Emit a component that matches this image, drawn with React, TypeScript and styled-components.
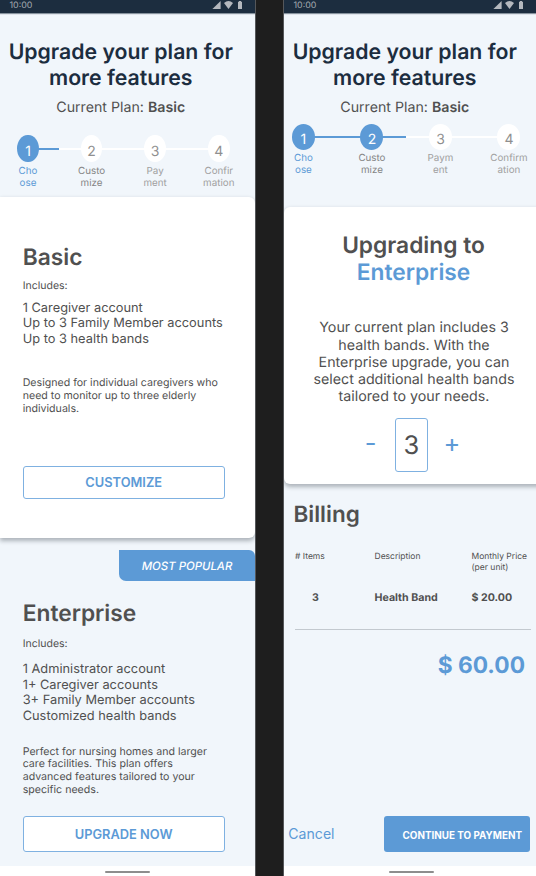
import React from "react";
import styled, { createGlobalStyle, css } from "styled-components";

const blue = "#5c9ad6";
const ink = "#505050";
const navy = "#1c2d3f";

const GlobalStyle = createGlobalStyle`
  * { box-sizing: border-box; }
  body {
    margin: 0;
    background: #1e1e1e;
    font-family: Inter, sans-serif;
    text-rendering: geometricPrecision;
    color: ${ink};
  }
`;

const Board = styled.main`
  display: grid;
  grid-template-columns: 255px 252px;
  column-gap: 29px;
  width: 536px;
  height: 876px;
  overflow: hidden;
`;

const Screen = styled.section`
  display: flex;
  flex-direction: column;
  height: 876px;
  min-width: 0;
  background: #f1f6fb;
  box-shadow: 0 0 0 1px #55575a;
  overflow: hidden;
`;

const StatusBar = styled.header`
  display: flex;
  justify-content: space-between;
  flex: none;
  height: 13px;
  padding: 0 12px 0 9.5px;
  background: ${navy};
  box-shadow: 0 1px 1px rgba(28, 45, 63, 0.5);
  color: #a3a9b0;
  font-size: 8.9px;
  line-height: 12px;
`;

const StatusIcons = styled.svg`
  display: block;
  width: 31px;
  height: 10px;
  fill: #b4b8be;
`;

const Heading = styled.div`
  flex: none;
  width: 241.5px;
  height: 76px;
  margin-top: 27px;
  text-align: center;
`;

const Title = styled.h1`
  margin: 0 0 7.4px;
  color: ${navy};
  font-size: 21.25px;
  font-weight: 600;
  line-height: 25.8px;
`;

const CurrentPlan = styled.p`
  margin: 0;
  font-size: 14.2px;
  line-height: 17px;
  b { font-weight: 600; }
`;

const Steps = styled.ol<{ $left: number; $top: number; $pitch: number }>`
  display: grid;
  grid-template-columns: repeat(4, ${(p) => p.$pitch}px);
  flex: none;
  margin: 0 0 0 ${(p) => p.$left}px;
  padding: ${(p) => p.$top}px 0 0;
  list-style: none;
`;

const Step = styled.li`
  display: grid;
  justify-items: center;
`;

const Track = styled.div<{ $from: string; $to: string; $height: number }>`
  display: grid;
  grid-template-rows: 100%;
  justify-items: center;
  width: calc(100% + 1px);
  height: ${(p) => p.$height}px;
  background:
    linear-gradient(${(p) => p.$from}, ${(p) => p.$from}) left center / 50% 2px no-repeat,
    linear-gradient(${(p) => p.$to}, ${(p) => p.$to}) right center / 50% 2px no-repeat;
`;

const Dot = styled.span<{ $on: boolean; $width: number; $height: number }>`
  width: ${(p) => p.$width}px;
  height: ${(p) => p.$height}px;
  border-radius: 50%;
  background: ${(p) => (p.$on ? blue : "#fff")};
  color: ${(p) => (p.$on ? "#fff" : "#8f8f8f")};
  font-size: 14px;
  line-height: ${(p) => p.$height + 6.6}px;
  text-align: center;
`;

const StepLabel = styled.span<{ $color: string }>`
  margin-top: 3.6px;
  color: ${(p) => p.$color};
  font-size: 9.8px;
  line-height: 12.1px;
  text-align: center;
  white-space: pre-line;
`;

const cardShadow = css`
  background: #fff;
  box-shadow: 0 2.5px 4px rgba(30, 40, 50, 0.32);
`;

const PlanCard = styled.article`
  ${cardShadow}
  display: flex;
  flex-direction: column;
  flex: none;
  height: 341px;
  padding: 46.3px 22.7px 39.5px;
  border-radius: 0 6px 6px 0;
`;

const PlanPanel = styled.article`
  display: flex;
  flex-direction: column;
  flex: 1;
  padding: 19.2px 22.7px 14px;
`;

const PlanName = styled.h2`
  margin: 0;
  font-size: 22.75px;
  font-weight: 600;
  line-height: 27px;
`;

const Includes = styled.p<{ $gap: number }>`
  margin: ${(p) => p.$gap}px 0 0;
  font-size: 10.5px;
  line-height: 13px;
`;

const Features = styled.ul<{ $gap: number }>`
  margin: ${(p) => p.$gap}px 0 0;
  padding: 0;
  list-style: none;
  font-size: 12.82px;
  line-height: 15.7px;
  white-space: nowrap;
`;

const Blurb = styled.p<{ $gap: number }>`
  margin: ${(p) => p.$gap}px 0 0;
  font-size: 10.62px;
  line-height: 12.8px;
  white-space: pre-line;
`;

const OutlineButton = styled.button<{ $height: number }>`
  width: 202px;
  height: ${(p) => p.$height}px;
  margin-top: auto;
  padding: 1px 0 0;
  border: 1px solid #7fb1e1;
  border-radius: 3px;
  background: #fff;
  color: ${blue};
  font: 600 12.85px Inter, sans-serif;
`;

const Ribbon = styled.div`
  align-self: flex-end;
  flex: none;
  width: 136px;
  height: 31px;
  margin-top: 11.5px;
  border-radius: 0 6px 0 7px;
  background: ${blue};
  color: #fff;
  font-size: 11.4px;
  font-style: italic;
  font-weight: 500;
  line-height: 32px;
  text-align: center;
`;

const NavBar = styled.footer`
  flex: none;
  height: 10px;
  padding-top: 5.4px;
  background: #fff;
`;

const NavHandle = styled.div`
  width: 45px;
  height: 2px;
  margin-left: 105px;
  border-radius: 1px;
  background: #8d8d8d;
`;

const UpgradeCard = styled.article`
  ${cardShadow}
  flex: none;
  width: 260px;
  height: 277.5px;
  padding-top: 25.3px;
  border-radius: 6px 0 0 6px;
`;

const StepperArea = styled.div<{ $height: number }>`
  flex: none;
  height: ${(p) => p.$height}px;
`;

const UpgradeTitle = styled.h2`
  margin: 0 0 0 -1px;
  font-size: 22.75px;
  font-weight: 600;
  line-height: 27.5px;
  text-align: center;
  span { display: block; color: ${blue}; }
`;

const UpgradeText = styled.p`
  margin: 32.6px 0 0;
  font-size: 14.25px;
  line-height: 17.1px;
  text-align: center;
  white-space: pre-line;
`;

const Counter = styled.div`
  display: flex;
  align-items: flex-start;
  margin: 12.7px 0 0 79.5px;
`;

const CounterSign = styled.button<{ $gap?: number }>`
  width: 14px;
  margin-left: ${(p) => p.$gap ?? 0}px;
  padding: 0;
  border: 0;
  background: none;
  color: ${blue};
  font: 400 25.5px/50px Inter, sans-serif;
`;

const CounterValue = styled.output`
  width: 33px;
  height: 54px;
  margin-left: 17.5px;
  border: 1px solid #7fb1e1;
  border-radius: 3px;
  font-size: 25.5px;
  line-height: 53px;
  text-align: center;
`;

const Billing = styled.section`
  display: flex;
  flex-direction: column;
  flex: none;
  padding: 17px 5.5px 0 11px;
`;

const BillingTitle = styled.h2`
  margin: 0 0 23.4px -1.5px;
  font-size: 22.5px;
  font-weight: 600;
  line-height: 27px;
`;

const BillRow = styled.div`
  display: grid;
  grid-template-columns: 79.5px 97px 1fr;
  white-space: nowrap;
`;

const BillHead = styled(BillRow)`
  height: 39.7px;
  padding-top: 0.4px;
  font-size: 8.5px;
  line-height: 10.8px;
`;

const BillItem = styled(BillRow)`
  height: 39px;
  border-bottom: 1px solid #c3c9cf;
  font-size: 10.65px;
  font-weight: 700;
  line-height: 13px;
`;

const Quantity = styled.span`
  padding-left: 17px;
`;

const Total = styled.strong`
  margin: 22px 5.5px 0 0;
  color: ${blue};
  font-size: 22.75px;
  font-weight: 700;
  line-height: 27px;
  text-align: right;
`;

const Actions = styled.div`
  display: flex;
  justify-content: space-between;
  flex: none;
  height: 35.5px;
  margin: auto 6px 14.4px 4.3px;
`;

const Cancel = styled.button`
  padding: 0;
  border: 0;
  background: none;
  color: ${blue};
  font: 400 14.1px/35px Inter, sans-serif;
`;

const Continue = styled.button`
  width: 146px;
  padding: 2px 8px 0 0;
  border: 0;
  border-radius: 3px;
  background: ${blue};
  color: #fff;
  font: 700 9.85px Inter, sans-serif;
  text-align: right;
  white-space: nowrap;
`;

function TopBar() {
  return (
    <StatusBar>
      <span>10:00</span>
      <StatusIcons viewBox="0 0 31 10">
        <path d="M8.6 1v8H0.4z" />
        <path d="M12 3Q16.5-1 21 3L16.5 9z" />
        <path d="M26 1.8h1V1h2v.8h1V9h-4z" />
      </StatusIcons>
    </StatusBar>
  );
}

function PageHeading() {
  return (
    <Heading>
      <Title>
        Upgrade your plan for
        <br />
        more features
      </Title>
      <CurrentPlan>
        Current Plan: <b>Basic</b>
      </CurrentPlan>
    </Heading>
  );
}

interface StepperProps {
  labels: string[];
  current: number;
  left: number;
  top: number;
  pitch: number;
  dot: [number, number];
}

function Stepper({ labels, current, left, top, pitch, dot }: StepperProps) {
  const line = (n: number, edge: boolean) => (edge ? "transparent" : n <= current ? blue : "#fff");
  return (
    <Steps $left={left} $top={top} $pitch={pitch}>
      {labels.map((label, i) => {
        const n = i + 1;
        return (
          <Step key={label}>
            <Track $height={dot[1]} $from={line(n, i === 0)} $to={line(n, i === 3)}>
              <Dot $on={n <= current} $width={dot[0]} $height={dot[1]}>{n}</Dot>
            </Track>
            <StepLabel $color={i === 0 ? blue : i === 1 ? "#858585" : "#a0a0a0"}>{label}</StepLabel>
          </Step>
        );
      })}
    </Steps>
  );
}

export default function App() {
  return (
    <>
      <GlobalStyle />
      <Board>
        <Screen>
          <TopBar />
          <PageHeading />
          <StepperArea $height={81.4}>
            <Stepper
              labels={["Cho\nose", "Custo\nmize", "Pay\nment", "Confir\nmation"]}
              current={1}
              left={-3.8}
              top={18.8}
              pitch={63.6}
              dot={[21.6, 27.6]}
            />
          </StepperArea>
          <PlanCard>
            <PlanName>Basic</PlanName>
            <Includes $gap={8}>Includes:</Includes>
            <Features $gap={9.1}>
              <li>1 Caregiver account</li>
              <li>Up to 3 Family Member accounts</li>
              <li>Up to 3 health bands</li>
            </Features>
            <Blurb $gap={29.6}>
              {"Designed for individual caregivers who\nneed to monitor up to three elderly\nindividuals."}
            </Blurb>
            <OutlineButton $height={33}>CUSTOMIZE</OutlineButton>
          </PlanCard>
          <Ribbon>MOST POPULAR</Ribbon>
          <PlanPanel>
            <PlanName>Enterprise</PlanName>
            <Includes $gap={10.4}>Includes:</Includes>
            <Features $gap={11.4}>
              <li>1 Administrator account</li>
              <li>1+ Caregiver accounts</li>
              <li>3+ Family Member accounts</li>
              <li>Customized health bands</li>
            </Features>
            <Blurb $gap={21}>
              {"Perfect for nursing homes and larger\ncare facilities. This plan offers\nadvanced features tailored to your\nspecific needs."}
            </Blurb>
            <OutlineButton $height={36}>UPGRADE NOW</OutlineButton>
          </PlanPanel>
          <NavBar>
            <NavHandle />
          </NavBar>
        </Screen>

        <Screen>
          <TopBar />
          <PageHeading />
          <StepperArea $height={90.6}>
            <Stepper
              labels={["Cho\nose", "Custo\nmize", "Paym\nent", "Confirm\nation"]}
              current={2}
              left={-14.8}
              top={8}
              pitch={68.5}
              dot={[23, 25.7]}
            />
          </StepperArea>
          <UpgradeCard>
            <UpgradeTitle>
              Upgrading to <span>Enterprise</span>
            </UpgradeTitle>
            <UpgradeText>
              {"Your current plan includes 3\nhealth bands. With the\nEnterprise upgrade, you can\nselect additional health bands\ntailored to your needs."}
            </UpgradeText>
            <Counter>
              <CounterSign>-</CounterSign>
              <CounterValue>3</CounterValue>
              <CounterSign $gap={15.6}>+</CounterSign>
            </Counter>
          </UpgradeCard>
          <Billing>
            <BillingTitle>Billing</BillingTitle>
            <BillHead>
              <span># Items</span>
              <span>Description</span>
              <span>
                Monthly Price
                <br />
                (per unit)
              </span>
            </BillHead>
            <BillItem>
              <Quantity>3</Quantity>
              <span>Health Band</span>
              <span>$ 20.00</span>
            </BillItem>
            <Total>$ 60.00</Total>
          </Billing>
          <Actions>
            <Cancel>Cancel</Cancel>
            <Continue>CONTINUE TO PAYMENT</Continue>
          </Actions>
          <NavBar>
            <NavHandle />
          </NavBar>
        </Screen>
      </Board>
    </>
  );
}
